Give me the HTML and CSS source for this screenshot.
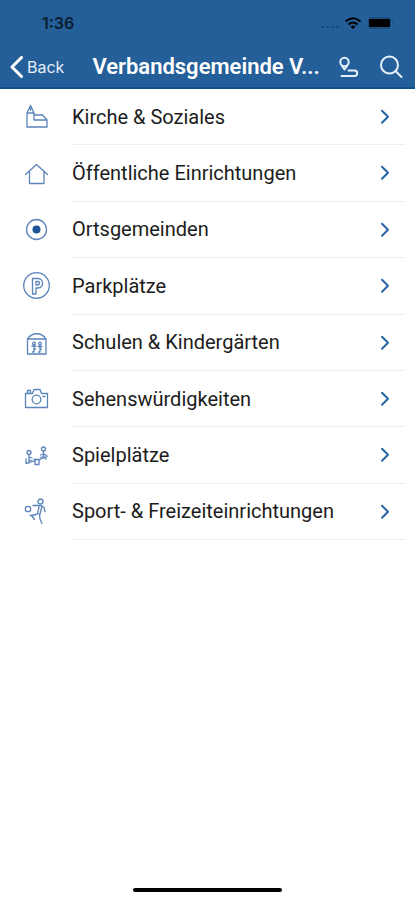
FILE: index.html
```html
<!DOCTYPE html>
<html lang="de">
<head>
<meta charset="utf-8">
<meta name="viewport" content="width=device-width, initial-scale=1">
<title>Verbandsgemeinde</title>
<link rel="stylesheet" href="styles.css">
</head>
<body>
<header class="header">
  <div class="status">
    <time class="clock">1:36</time>
    <div class="indicators">
      <svg class="signal" viewBox="0 0 20 14"><path d="M2 11h3M7 11h3M12 11h3M17 11h3"/></svg>
      <svg class="wifi" viewBox="0 0 18 14"><path d="M1.500 5.500Q9-1 16.500 5.500M4.500 8.500Q9 4.500 13.500 8.500"/><path class="solid" d="M6.500 10.500Q9 8.500 11.500 10.500L9 13Z"/></svg>
      <svg class="battery" viewBox="0 0 28 14"><rect class="case" x="1" y="1" width="23" height="12" rx="3"/><rect x="2" y="3" width="21" height="8" rx="1"/><path class="case" d="M25 5q2 2 0 4z"/></svg>
    </div>
  </div>
  <nav class="bar">
    <a class="back" href="#"><svg class="back-icon" viewBox="0 0 13 22"><path d="M11.500 1.500L2 11l9.500 9.500"/></svg>Back</a>
    <h1 class="title">Verbandsgemeinde V...</h1>
    <button class="tool" type="button" aria-label="Route"><svg viewBox="0 0 24 24"><circle cx="7.500" cy="7" r="4.200"/><path d="M5 11l2.500 3.500L10 11M11.500 15.500h6a2.700 2.700 0 0 1 0 5.400H4.500"/></svg></button>
    <button class="tool search" type="button" aria-label="Suche"><svg viewBox="0 0 24 24"><circle cx="10.500" cy="10" r="8.500"/><path d="M16.500 16l6 6"/></svg></button>
  </nav>
</header>
<main>
  <ul class="list">
    <li class="item"><a class="row" href="#">
      <svg class="icon" viewBox="0 0 30 30"><path d="M5 25V11L8.500 3.500 12 11v7h13M12 13h8.500l4.500 5v7H5M5 11h7M8.500 3.500v5"/></svg>
      <span class="label">Kirche &amp; Soziales</span><svg class="chevron" viewBox="0 0 10 14"><path d="M2 1l6 6-6 6"/></svg></a></li>
    <li class="item"><a class="row" href="#">
      <svg class="icon" viewBox="0 0 30 30"><path d="M3.500 15.500L14.500 5.500l11 10M22 13v11.500H7.500V13"/></svg>
      <span class="label">Öffentliche Einrichtungen</span><svg class="chevron" viewBox="0 0 10 14"><path d="M2 1l6 6-6 6"/></svg></a></li>
    <li class="item"><a class="row" href="#">
      <svg class="icon" viewBox="0 0 30 30"><circle cx="14.500" cy="14.500" r="10"/><circle class="dot" cx="14.500" cy="14.500" r="4"/></svg>
      <span class="label">Ortsgemeinden</span><svg class="chevron" viewBox="0 0 10 14"><path d="M2 1l6 6-6 6"/></svg></a></li>
    <li class="item"><a class="row" href="#">
      <svg class="icon" viewBox="0 0 30 30"><circle cx="14.500" cy="14.500" r="12.800"/><path d="M10.500 23V7.500H16c6 0 6 9.500 0 9.500h-2v6zM14 14v-3.500h2c2 0 2 3.500 0 3.500z"/></svg>
      <span class="label">Parkplätze</span><svg class="chevron" viewBox="0 0 10 14"><path d="M2 1l6 6-6 6"/></svg></a></li>
    <li class="item"><a class="row" href="#">
      <svg class="icon" viewBox="0 0 30 30"><path d="M5.500 11h18.500v15H5.500zM5.500 11C10 4 19.500 4 24 11"/><circle cx="12" cy="15.500" r="1.300"/><circle cx="18" cy="15.500" r="1.300"/><path d="M10 18h4M12 17v4M10.500 24h1.500v-3h1.500M16 18.500h4M18 17v4M16.500 24h1.500v-3h1.500"/></svg>
      <span class="label">Schulen &amp; Kindergärten</span><svg class="chevron" viewBox="0 0 10 14"><path d="M2 1l6 6-6 6"/></svg></a></li>
    <li class="item"><a class="row" href="#">
      <svg class="icon" viewBox="0 0 30 30"><path d="M3.500 9.500h7L12 5.500h6l1.500 4h6v14h-22zM5.500 9V6.500h3V9M21 12.500h2"/><circle cx="14.500" cy="15.500" r="4.300"/></svg>
      <span class="label">Sehenswürdigkeiten</span><svg class="chevron" viewBox="0 0 10 14"><path d="M2 1l6 6-6 6"/></svg></a></li>
    <li class="item"><a class="row" href="#">
      <svg class="icon" viewBox="0 0 30 30"><circle cx="7" cy="12.500" r="2"/><circle cx="21.500" cy="9" r="2"/><path d="M7 15v5l3 1M7 17l3 1M4 19v4h3v-3M4 23.500l8-2.500M18 19.500l7-3M21.500 11.500v5l-3 1M21.500 14l-3 1M22 14l3 2M22 17l2 2M12 19.500h6M13 20v4.500h4V20"/></svg>
      <span class="label">Spielplätze</span><svg class="chevron" viewBox="0 0 10 14"><path d="M2 1l6 6-6 6"/></svg></a></li>
    <li class="item"><a class="row" href="#">
      <svg class="icon" viewBox="0 0 30 30"><circle cx="6" cy="12" r="2.700"/><circle cx="18.500" cy="4.500" r="2.500"/><path d="M11 8.500h8l3 2 1 4M20 9l-2 8M17 10l-1.500 7-6 1.500 3 4M17.500 17l.5 5 2 4.500M8 18l3 2"/></svg>
      <span class="label">Sport- &amp; Freizeiteinrichtungen</span><svg class="chevron" viewBox="0 0 10 14"><path d="M2 1l6 6-6 6"/></svg></a></li>
  </ul>
</main>
<footer class="footer"><div class="home"></div></footer>
</body>
</html>
```
FILE: styles.css
```css
* { box-sizing: border-box; }
body {
  margin: 0;
  min-height: 100vh;
  display: flex;
  flex-direction: column;
  background: #fff;
  color: #1c1c1c;
  font-family: Roboto, "Liberation Sans", sans-serif;
}
svg {
  display: block;
  flex: none;
  fill: none;
  stroke: currentColor;
  stroke-linecap: round;
  stroke-linejoin: round;
}
.header { background: #255f99; color: #fff; border-bottom: 2px solid #0d5290; }
.status {
  height: 46px;
  padding: 0 20px 0 42px;
  display: flex;
  align-items: center;
  justify-content: space-between;
  color: #0b1c2e;
}
.clock { font-family: Inter, sans-serif; font-size: 16px; font-weight: 600; }
.indicators { display: flex; align-items: center; gap: 5px; }
.signal { width: 20px; height: 14px; stroke: #1d4877; stroke-width: 2; stroke-linecap: butt; }
.wifi { width: 18px; height: 14px; color: #000; stroke-width: 2; stroke-linecap: butt; }
.wifi .solid { fill: #000; stroke: none; }
.battery { width: 28px; height: 14px; fill: #000; stroke: none; }
.battery .case { fill: #1b4f80; }
.bar { height: 41px; padding: 0 12px 0 10px; display: flex; align-items: center; }
.back {
  display: flex;
  align-items: center;
  gap: 4px;
  color: #e6f0fa;
  font-family: Inter, sans-serif;
  font-size: 16px;
  text-decoration: none;
}
.back-icon { width: 13px; height: 22px; color: #fff; stroke-width: 3; }
.title {
  flex: 1;
  min-width: 0;
  margin: 0 0 0 28px;
  overflow: hidden;
  white-space: nowrap;
  font-size: 22px;
  line-height: 28px;
  font-weight: 600;
}
.tool { flex: none; padding: 0; border: 0; background: none; color: #e6f0fa; }
.tool svg { width: 24px; height: 24px; stroke-width: 2; }
.search { margin-left: 18px; }
.list {
  margin: 0;
  padding: 0;
  list-style: none;
  min-height: 451px;
  display: grid;
  grid-auto-rows: 1fr;
}
.item { display: grid; }
.row {
  display: grid;
  grid-template-columns: 72px 1fr 25px 10px;
  align-items: center;
  color: inherit;
  text-decoration: none;
}
.icon { width: 30px; height: 30px; margin-left: 22px; color: #5b84bb; stroke-width: 1.3; }
.icon .dot { fill: #1c5598; stroke: none; }
.label {
  align-self: stretch;
  display: flex;
  align-items: center;
  border-bottom: 1px solid #eee;
  font-size: 20px;
  line-height: 24px;
}
.chevron {
  align-self: stretch;
  width: 25px;
  height: 100%;
  padding-right: 15px;
  border-bottom: 1px solid #eee;
  color: #2a64a3;
  stroke-width: 2;
}
.footer { margin-top: auto; padding-bottom: 8px; display: flex; justify-content: center; }
.home { width: 36%; height: 4px; border-radius: 2px; background: #000; }
```
